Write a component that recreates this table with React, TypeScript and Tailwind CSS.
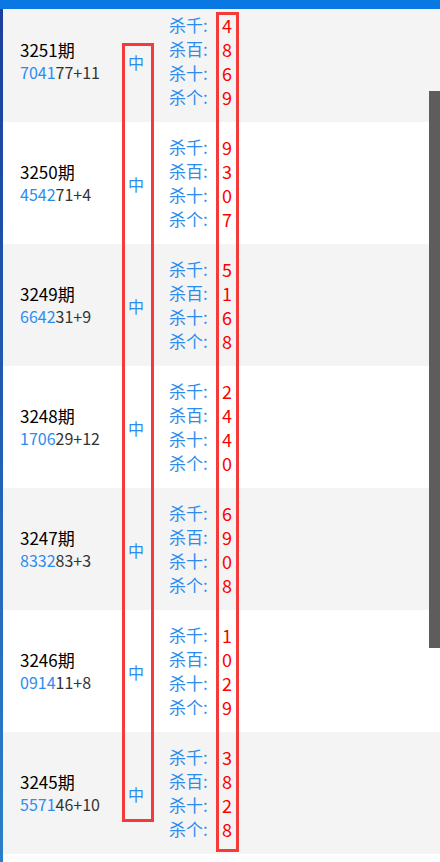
import React from 'react';

type Row = {
  issue: string;
  code: string;
  extra: string;
  kills: string[];
};

const rows: Row[] = [
  { issue: '3251', code: '704177', extra: '+11', kills: ['4', '8', '6', '9'] },
  { issue: '3250', code: '454271', extra: '+4', kills: ['9', '3', '0', '7'] },
  { issue: '3249', code: '664231', extra: '+9', kills: ['5', '1', '6', '8'] },
  { issue: '3248', code: '170629', extra: '+12', kills: ['2', '4', '4', '0'] },
  { issue: '3247', code: '833283', extra: '+3', kills: ['6', '9', '0', '8'] },
  { issue: '3246', code: '091411', extra: '+8', kills: ['1', '0', '2', '9'] },
  { issue: '3245', code: '557146', extra: '+10', kills: ['3', '8', '2', '8'] },
];

const labels = ['杀千:', '杀百:', '杀十:', '杀个:'];

export default function App() {
  return (
    <div
      className="relative w-[440px] h-[862px] overflow-hidden bg-white"
      style={{ fontFamily: '"Noto Sans CJK SC", "Noto Sans", sans-serif' }}
    >
      <div className="flex flex-col">
        {rows.map((row, i) => (
          <div
            key={row.issue}
            className={`flex items-center h-[122px] pl-[20px] ${i % 2 === 0 ? 'bg-[#f4f4f4]' : 'bg-white'}`}
          >
            <div className="w-[108px] flex flex-col">
              <span className="text-[17px] leading-[23px] text-black">{row.issue}期</span>
              <span className="text-[16px] leading-[23px] text-[#333]">
                <span className="text-[#2d8cf0]">{row.code.slice(0, 4)}</span>
                {row.code.slice(4)}
                {row.extra}
              </span>
            </div>
            <div className="w-[41px] text-[16px] text-[#2d8cf0] pt-[1px]">中</div>
            <div className="flex flex-col">
              {row.kills.map((k, j) => (
                <div key={j} className="flex h-[24px] items-center text-[17px]">
                  <span className="w-[53px] text-[#2d8cf0]">{labels[j]}</span>
                  <span className="text-[18px] text-[#ff0000]">{k}</span>
                </div>
              ))}
            </div>
          </div>
        ))}
      </div>

      {/* window chrome */}
      <div className="absolute top-0 left-0 w-full h-[9px] bg-[#0a78e2]" />
      <div className="absolute top-[9px] left-0 w-[3px] h-full bg-gradient-to-b from-[#1c3e9e] to-[#2c80c8]" />

      {/* scrollbar */}
      <div className="absolute left-[429px] top-[91px] w-[11px] h-[557px] bg-[#5d5d5d]" />

      {/* red annotation boxes */}
      <div className="absolute left-[122px] top-[43px] w-[32px] h-[779px] border-[3px] border-[#f53a3a]" />
      <div className="absolute left-[216px] top-[12px] w-[23px] h-[840px] border-[3px] border-[#f53a3a]" />
    </div>
  );
}
